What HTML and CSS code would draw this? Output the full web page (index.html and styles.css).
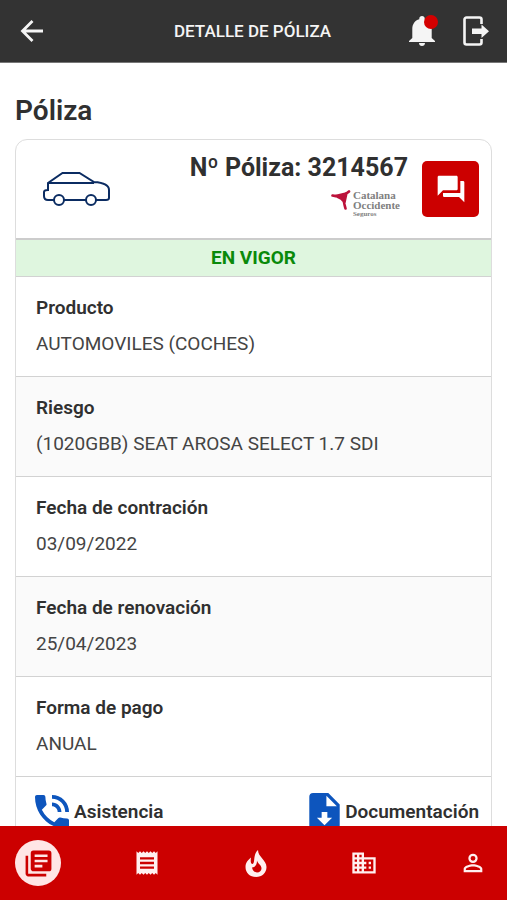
FILE: index.html
```
<!DOCTYPE html>
<html lang="es">
<head>
    <meta charset="utf-8">
    <meta name="viewport" content="width=device-width, initial-scale=1">
    <title>Detalle de póliza</title>
    <link rel="stylesheet" href="styles.css">
</head>
<body>
    <header class="topbar">
        <button class="icon-btn" type="button" aria-label="Volver">
            <svg class="icon-back" viewBox="0 0 24 24"><path d="M12.500 2 2.500 12l10 10M3 12h20" fill="none" stroke="currentColor" stroke-width="2.800"/></svg>
        </button>
        <h1 class="topbar-title">DETALLE DE PÓLIZA</h1>
        <div class="topbar-actions">
            <button class="icon-btn" type="button" aria-label="Notificaciones">
                <svg class="icon-bell" viewBox="0 0 26 30"><path d="M13 0c1.600 0 2.700 1.100 2.700 2.500v.8c4.500 1.200 7 5 7 9.700v9L26 25v1H0v-1l3.300-3v-9c0-4.700 2.500-8.500 7-9.700v-.8C10.300 1.100 11.400 0 13 0zM10 27h6c0 1.700-1.300 3-3 3s-3-1.300-3-3z" fill="currentColor"/></svg>
                <span class="dot"></span>
            </button>
            <button class="icon-btn" type="button" aria-label="Salir">
                <svg class="icon-exit" viewBox="0 0 26 30"><path d="M18.500 8V3.500a2 2 0 0 0-2-2h-13a2 2 0 0 0-2 2v23a2 2 0 0 0 2 2h13a2 2 0 0 0 2-2V23" fill="none" stroke="currentColor" stroke-width="2.600"/><path d="M9 12.500h9.500V8.500L26 15.300l-7.500 6.800v-4H9z" fill="currentColor"/></svg>
            </button>
        </div>
    </header>

    <main class="content">
        <h2 class="page-title">Póliza</h2>

        <section class="card">
            <div class="card-head">
                <svg class="car" viewBox="0 0 68 34" fill="none" stroke="#0b2c62" stroke-width="2"><path d="M11 28H5q-4 0-4-4v-4q0-2 4-2v-7L19.500 1h17L51 10q15 1 15 8v8q0 2-3 2H53M43 28H21M5 11h46"/><circle cx="16" cy="28" r="5"/><circle cx="48" cy="28" r="5"/></svg>
                <div class="policy">
                    <h3 class="policy-number">Nº Póliza: 3214567</h3>
                    <div class="insurer">
                        <svg class="insurer-mark" viewBox="0 0 20 20"><path d="M1.500 5.500C8 7 12 7 18 1.500M12.500 6.500C12 11 13.500 14 14.500 18.500M6 6.500Q11 8 13.500 12L15 5z" fill="#bc123b" stroke="#bc123b" stroke-width="2.600" stroke-linecap="round"/></svg>
                        <div class="insurer-name">Catalana<br>Occidente<small>Seguros</small></div>
                    </div>
                </div>
                <button class="chat-btn" type="button" aria-label="Mensajes">
                    <svg viewBox="0 0 24 24"><path d="M17 12V3c0-.55-.45-1-1-1H3c-.55 0-1 .45-1 1v14l4-4h10c.55 0 1-.45 1-1zM21 6h-2v9H6v2c0 .55.45 1 1 1h11l4 4V7c0-.55-.45-1-1-1z" fill="currentColor"/></svg>
                </button>
            </div>
            <div class="status">EN VIGOR</div>
            <dl class="details">
                <div class="row">
                    <dt>Producto</dt>
                    <dd>AUTOMOVILES (COCHES)</dd>
                </div>
                <div class="row">
                    <dt>Riesgo</dt>
                    <dd>(1020GBB) SEAT AROSA SELECT 1.7 SDI</dd>
                </div>
                <div class="row">
                    <dt>Fecha de contración</dt>
                    <dd>03/09/2022</dd>
                </div>
                <div class="row">
                    <dt>Fecha de renovación</dt>
                    <dd>25/04/2023</dd>
                </div>
                <div class="row">
                    <dt>Forma de pago</dt>
                    <dd>ANUAL</dd>
                </div>
            </dl>
            <div class="card-links">
                <a class="card-link" href="#asistencia">
                    <svg class="icon-phone" viewBox="3 3 18 18"><path d="M20 15.500c-1.250 0-2.450-.2-3.570-.57a1 1 0 0 0-1.020.24l-2.200 2.200a15.050 15.050 0 0 1-6.590-6.590l2.200-2.210a.96.96 0 0 0 .25-1A11.360 11.360 0 0 1 8.500 4c0-.55-.45-1-1-1H4c-.55 0-1 .45-1 1 0 9.390 7.610 17 17 17 .55 0 1-.45 1-1v-3.500c0-.55-.45-1-1-1zM19 12h2a9 9 0 0 0-9-9v2c3.870 0 7 3.130 7 7zm-4 0h2c0-2.760-2.240-5-5-5v2c1.660 0 3 1.340 3 3z" fill="currentColor"/></svg>
                    Asistencia
                </a>
                <a class="card-link" href="#documentacion">
                    <svg class="icon-doc" viewBox="4 2 16 20"><path d="M14 2H6a2 2 0 0 0-2 2v16c0 1.100.9 2 2 2h12a2 2 0 0 0 2-2V8zM12 19l-4-4h2.500v-3h3v3H16zM13 9V3.500L18.500 9z" fill="currentColor"/></svg>
                    Documentación
                </a>
            </div>
        </section>
    </main>

    <nav class="tabbar">
        <a class="tab active" href="#polizas" aria-label="Pólizas">
            <svg viewBox="0 0 24 24"><path d="M4 6H2v14c0 1.100.9 2 2 2h14v-2H4zM20 2H8a2 2 0 0 0-2 2v12c0 1.100.9 2 2 2h12a2 2 0 0 0 2-2V4a2 2 0 0 0-2-2zm-1 9H9V9h10zm-4 4H9v-2h6zm4-8H9V5h10z" fill="currentColor"/></svg>
        </a>
        <a class="tab" href="#recibos" aria-label="Recibos">
            <svg viewBox="0 0 24 24"><path d="M18 17H6v-2h12zm0-4H6v-2h12zm0-4H6V7h12zM3 22l1.500-1.500L6 22l1.500-1.500L9 22l1.500-1.500L12 22l1.500-1.500L15 22l1.500-1.500L18 22l1.500-1.500L21 22V2l-1.500 1.500L18 2l-1.500 1.500L15 2l-1.500 1.500L12 2l-1.500 1.500L9 2 7.500 3.500 6 2 4.500 3.500 3 2z" fill="currentColor"/></svg>
        </a>
        <a class="tab" href="#siniestros" aria-label="Siniestros">
            <svg viewBox="0 0 24 28"><path d="M14 1C14 8 22.500 11 22.500 18 22.500 24 18 28 12 28S1.500 24 1.500 18C1.500 13.500 4 11 7 8.500 6.500 12 6.500 14.500 8.500 15 11.500 14 8.500 6 14 1zM13 11.500c0 3.500-1 6.500-5 7 .5 3 2.500 5 5 5 2.700 0 4.500-1.500 4.500-4.200 0-3.300-3.500-4.300-4.500-7.800z" fill="currentColor" fill-rule="evenodd"/></svg>
        </a>
        <a class="tab" href="#empresa" aria-label="Empresa">
            <svg viewBox="0 0 24 24"><path d="M12 7V3H2v18h20V7zM6 19H4v-2h2zm0-4H4v-2h2zm0-4H4V9h2zm0-4H4V5h2zm4 12H8v-2h2zm0-4H8v-2h2zm0-4H8V9h2zm0-4H8V5h2zm10 12h-8v-2h2v-2h-2v-2h2v-2h-2V9h8zm-2-8h-2v2h2zm0 4h-2v2h2z" fill="currentColor"/></svg>
        </a>
        <a class="tab" href="#perfil" aria-label="Perfil">
            <svg viewBox="0 0 24 24"><path d="M12 5.900a2.100 2.100 0 1 1 0 4.200 2.100 2.100 0 0 1 0-4.200m0 9c2.970 0 6.100 1.460 6.100 2.100v1.100H5.900V17c0-.64 3.130-2.100 6.100-2.100M12 4a4 4 0 1 0 0 8 4 4 0 0 0 0-8zm0 9c-2.670 0-8 1.340-8 4v3h16v-3c0-2.660-5.330-4-8-4z" fill="currentColor"/></svg>
        </a>
    </nav>
</body>
</html>
```
FILE: styles.css
```
* {
    box-sizing: border-box;
}

body {
    display: flex;
    flex-direction: column;
    height: 100vh;
    margin: 0;
    font-family: Roboto, "Liberation Sans", sans-serif;
    font-size: 19px;
    line-height: 24px;
    color: #303030;
    background: #fff;
}

h1, h2, h3, dl, dd {
    margin: 0;
}

svg {
    display: block;
    flex: none;
}

button {
    padding: 0;
    border: none;
    cursor: pointer;
}

a {
    color: inherit;
    text-decoration: none;
}

/* Top bar */
.topbar {
    display: grid;
    grid-template-columns: 1fr auto 1fr;
    align-items: center;
    flex: none;
    height: 63px;
    padding: 0 18px 0 20px;
    background: #333;
    border-bottom: 1px solid #777;
    color: #f5f5f5;
}

.topbar-title {
    padding-right: 4px;
    font-size: 17px;
    font-weight: 500;
}

.topbar-actions {
    display: flex;
    justify-content: flex-end;
    gap: 28px;
}

.icon-btn {
    position: relative;
    justify-self: start;
    background: none;
    color: inherit;
}

.icon-back {
    width: 24px;
    height: 24px;
}

.icon-bell,
.icon-exit {
    width: 26px;
    height: 30px;
}

.dot {
    position: absolute;
    top: -1px;
    right: -3px;
    width: 14px;
    height: 14px;
    border-radius: 50%;
    background: #d40000;
}

/* Content */
.content {
    flex: 1;
    min-height: 0;
    padding: 32px 15px 0;
    overflow-y: auto;
    scrollbar-width: none;
}

.page-title {
    margin-bottom: 12px;
    font-size: 28px;
    font-weight: 600;
    line-height: 32px;
}

.card {
    border: 1px solid #ddd;
    border-radius: 12px;
    overflow: hidden;
}

.card-head {
    display: flex;
    align-items: center;
    height: 98px;
    padding: 0 12px 0 27px;
}

.car {
    width: 68px;
    height: 34px;
}

.policy {
    display: flex;
    flex-direction: column;
    align-items: flex-end;
    flex: 1;
    gap: 6px;
    padding-right: 14px;
}

.policy-number {
    font-size: 25px;
    font-weight: 700;
    line-height: 32px;
}

.insurer {
    display: flex;
    gap: 2px;
    padding: 0 8px 8px 0;
}

.insurer-mark {
    width: 20px;
    height: 20px;
}

.insurer-name {
    font-family: "Liberation Serif", serif;
    font-size: 11px;
    font-weight: bold;
    line-height: 10px;
    color: #808080;
}

.insurer-name small {
    display: block;
    font-size: 7px;
    line-height: 8px;
}

.chat-btn {
    display: flex;
    align-items: center;
    justify-content: center;
    width: 57px;
    height: 56px;
    border-radius: 5px;
    background: #c00;
    color: #fff;
}

.chat-btn svg {
    width: 32px;
    height: 32px;
}

.status {
    height: 38px;
    border-top: 2px solid #ccc;
    background: #dff6df;
    color: #0a8a0a;
    font-weight: 700;
    line-height: 35px;
    text-align: center;
}

.row {
    padding: 19px 20px 20px;
    border-top: 1px solid #d2d2d2;
}

.row:nth-child(even) {
    background: #fafafa;
}

.row dt {
    margin-bottom: 12px;
    font-weight: 600;
}

.row dd {
    color: #444;
}

.card-links {
    display: flex;
    justify-content: space-between;
    padding: 16px 12px 16px 19px;
    border-top: 1px solid #d2d2d2;
}

.card-link {
    display: flex;
    align-items: center;
    gap: 5px;
    height: 38px;
    font-weight: 600;
}

.card-link svg {
    color: #0d55bd;
}

.icon-phone {
    width: 34px;
    height: 34px;
}

.icon-doc {
    width: 31px;
    height: 38px;
}

/* Bottom navigation */
.tabbar {
    display: flex;
    align-items: center;
    justify-content: space-between;
    flex: none;
    height: 74px;
    padding: 0 11px 0 15px;
    background: #c00;
    color: #fff0f0;
}

.tab {
    display: flex;
    align-items: center;
    justify-content: center;
    width: 46px;
    height: 46px;
    border-radius: 50%;
}

.tab svg {
    width: 28px;
    height: 28px;
}

.tab.active {
    background: #ffe5e5;
    color: #c00;
}

.tab.active svg {
    width: 31px;
    height: 31px;
}
```
